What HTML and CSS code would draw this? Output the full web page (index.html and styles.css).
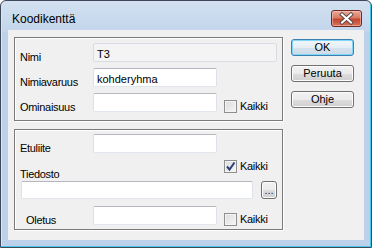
FILE: index.html
```html
<!DOCTYPE html>
<html lang="fi">
<head>
    <meta charset="UTF-8">
    <title>Koodikenttä</title>
    <link rel="stylesheet" href="styles.css">
</head>
<body>
    <div class="window">
        <div class="titlebar">
            <span class="title">Koodikenttä</span>
            <button class="close" aria-label="Sulje">
                <svg width="29" height="15" viewBox="0 0 29 15">
                    <path d="M10 3.5 L19 11.5 M19 3.5 L10 11.5" stroke="#5a4a48" stroke-width="4" stroke-linecap="square"/>
                    <path d="M10 3.5 L19 11.5 M19 3.5 L10 11.5" stroke="#fff" stroke-width="2" stroke-linecap="square"/>
                </svg>
            </button>
        </div>
        <div class="client">
            <div class="groups">
                <div class="group group-top">
                    <div class="row">
                        <label class="label">Nimi</label>
                        <div class="field field-wide disabled">T3</div>
                    </div>
                    <div class="row">
                        <label class="label">Nimiavaruus</label>
                        <div class="field">kohderyhma</div>
                    </div>
                    <div class="row">
                        <label class="label">Ominaisuus</label>
                        <div class="field"></div>
                        <span class="check"><span class="box"></span>Kaikki</span>
                    </div>
                </div>
                <div class="group group-bottom">
                    <div class="row">
                        <label class="label">Etuliite</label>
                        <div class="field"></div>
                    </div>
                    <div class="row row-file-head">
                        <label class="label label-file">Tiedosto</label>
                        <span class="check check-top"><span class="box checked">
                            <svg width="11" height="11" viewBox="0 0 11 11"><path d="M2 5.5 L4.5 8.5 L9.5 1.5" fill="none" stroke="#2b3f78" stroke-width="2"/></svg>
                        </span>Kaikki</span>
                    </div>
                    <div class="row row-file">
                        <div class="field field-file"></div>
                        <button class="btn btn-browse">...</button>
                    </div>
                    <div class="row row-default">
                        <label class="label label-indent">Oletus</label>
                        <div class="field"></div>
                        <span class="check"><span class="box"></span>Kaikki</span>
                    </div>
                </div>
            </div>
            <div class="actions">
                <button class="btn btn-default">OK</button>
                <button class="btn">Peruuta</button>
                <button class="btn">Ohje</button>
            </div>
        </div>
    </div>
</body>
</html>
```

FILE: styles.css
```css
:root {
    --frame-color: #bdd2ea;
    --client-color: #f0f0f0;
    --group-border: #7a7a7a;
    --text-color: #000;
}

body {
    margin: 0;
    font-family: "Liberation Sans", Arial, sans-serif;
    font-size: 11px;
    color: var(--text-color);
}

.window {
    width: 372px;
    height: 248px;
    box-sizing: border-box;
    border: 1px solid #3e4a5a;
    border-radius: 6px 6px 0 0;
    background: linear-gradient(#d3e1f1, #c3d6ec 30px, var(--frame-color) 31px);
    box-shadow: inset -1px -1px 0 #48c6ea, inset 1px 0 0 #d9e5f2;
    display: flex;
    flex-direction: column;
}

.titlebar {
    height: 29px;
    display: flex;
    align-items: flex-start;
    justify-content: space-between;
}
.title {
    font-size: 12px;
    margin: 11px 0 0 11px;
    line-height: 14px;
}
.close {
    width: 31px;
    height: 17px;
    margin: 9px 9px 0 0;
    padding: 0;
    border: 1px solid #6e2a22;
    border-radius: 3px;
    background: linear-gradient(#e9a898, #d97c66 45%, #c4452e 55%, #d5755c);
    box-shadow: inset 0 0 0 1px rgba(255, 210, 200, 0.5);
    display: flex;
    align-items: center;
    justify-content: center;
}

.client {
    flex: 1;
    margin: 0 7px 7px 7px;
    background-color: var(--client-color);
    display: flex;
    padding: 7px 0 0 6px;
    gap: 8px;
}

.groups {
    width: 269px;
    display: flex;
    flex-direction: column;
    gap: 8px;
}
.group {
    box-sizing: border-box;
    border: 1px solid var(--group-border);
    box-shadow: inset 1px 1px 0 #fff, 1px 1px 0 #fff;
    display: flex;
    flex-direction: column;
    padding-left: 5px;
}
.group-top {
    height: 84px;
    padding-top: 5px;
    gap: 6px;
}
.group-bottom {
    height: 101px;
    padding-top: 4px;
}

.row {
    display: flex;
    align-items: flex-end;
    height: 19px;
}
.label {
    width: 73px;
    flex-shrink: 0;
    line-height: 13px;
    margin-bottom: -2px;
    letter-spacing: -0.3px;
}
.label-indent {
    padding-left: 6px;
    box-sizing: border-box;
}

.field {
    width: 124px;
    height: 19px;
    box-sizing: border-box;
    background: #fff;
    border: 1px solid #dfe1e8;
    border-top-color: #b4b7be;
    border-bottom-color: #e1e6ee;
    border-radius: 2px;
    padding: 4px 3px 0;
    line-height: 13px;
}
.field-wide {
    width: 184px;
}
.disabled {
    background: #f4f4f4;
    border-color: #d9dde3;
}

.check {
    display: flex;
    align-items: flex-end;
    margin-left: 7px;
    margin-bottom: -1px;
    line-height: 13px;
    letter-spacing: -0.3px;
}
.box {
    width: 13px;
    height: 13px;
    box-sizing: border-box;
    border: 1px solid #8e8f8f;
    background: linear-gradient(135deg, #dcdcdc, #f6f6f6);
    box-shadow: inset 0 0 0 1px #f4f4f4;
    margin-right: 3px;
    display: flex;
    align-items: center;
    justify-content: center;
}

.row-file-head {
    height: 28px;
}
.label-file {
    width: 204px;
    margin-bottom: 0;
}
.check-top {
    align-self: flex-start;
    margin: 7px 0 0 0;
}

.row-file {
    height: 18px;
}
.field-file {
    width: 232px;
    height: 18px;
    margin-left: 1px;
}

.row-default {
    margin-top: 7px;
}

.actions {
    display: flex;
    flex-direction: column;
    gap: 9px;
    padding-top: 2px;
}

.btn {
    width: 63px;
    height: 17px;
    padding: 0;
    font-family: inherit;
    font-size: 11px;
    color: var(--text-color);
    border: 1px solid #707070;
    border-radius: 3px;
    background: linear-gradient(#f2f2f2, #ebebeb 50%, #dddddd 51%, #cfcfcf);
    box-shadow: inset 0 0 0 1px #fcfcfc;
    line-height: 13px;
}
.btn-default {
    border-color: #3c7fb1;
    box-shadow: inset 0 0 0 1px #7fd6f6;
    background: linear-gradient(#f0f6fa, #e6eef5 50%, #d6e3ee 51%, #cddbe8);
}
.btn-browse {
    width: 16px;
    height: 18px;
    margin-left: 8px;
    line-height: 10px;
    color: #1c2a6a;
}
```
